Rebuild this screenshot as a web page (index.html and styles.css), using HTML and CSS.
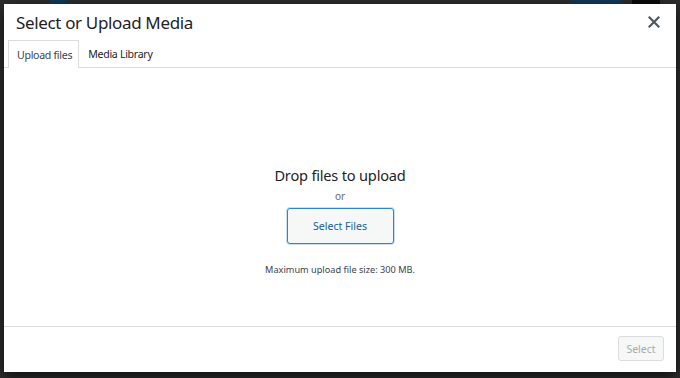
FILE: index.html
```html
<!DOCTYPE html>
<html lang="en">
<head>
  <meta charset="UTF-8" />
  <title>Select or Upload Media</title>
  <link rel="stylesheet" href="styles.css">
</head>
<body>
  <div class="backdrop">
    <span class="bd-blue bd-left"></span>
    <span class="bd-blue bd-publish"></span>
    <span class="bd-black"></span>
  </div>

  <div class="modal">
    <div class="modal-header">
      <h1>Select or Upload Media</h1>
      <button type="button" class="close-btn" aria-label="Close">
        <svg width="12" height="12" viewBox="0 0 12 12">
          <path d="M1.5 1.5 L10.5 10.5 M10.5 1.5 L1.5 10.5" stroke="#50575e" stroke-width="2.2" stroke-linecap="square"/>
        </svg>
      </button>
    </div>

    <div class="tabs">
      <a class="tab active">Upload files</a>
      <a class="tab">Media Library</a>
    </div>

    <div class="uploader">
      <h2>Drop files to upload</h2>
      <p class="or">or</p>
      <button type="button" class="select-files">Select Files</button>
      <p class="max-size">Maximum upload file size: 300 MB.</p>
    </div>

    <div class="modal-footer">
      <button type="button" class="select-btn" disabled>Select</button>
    </div>
  </div>
</body>
</html>
```

FILE: styles.css
```css
:root {
  --text: #1d2327;
  --blue: #2271b1;
  --border: #dcdcde;
  --btn-bg: #f6f7f7;
}

* {
  margin: 0;
  padding: 0;
  box-sizing: border-box;
  font-family: 'Noto Sans', 'Open Sans', sans-serif;
}

body {
  background-color: #2e2e2e;
  padding: 4px;
  height: 378px;
  overflow: hidden;
  position: relative;
}

/* dimmed editor toolbar behind the modal */
.backdrop {
  position: absolute;
  top: 0;
  left: 0;
  right: 0;
  height: 4px;
}

.bd-blue {
  position: absolute;
  top: 0;
  height: 4px;
  background: #123a5a;
}

.bd-left {
  left: 50px;
  width: 17px;
}

.bd-publish {
  left: 571px;
  width: 50px;
}

.bd-black {
  position: absolute;
  left: 632px;
  top: 0;
  width: 28px;
  height: 4px;
  background: #0c0c0c;
}

.modal {
  width: 672px;
  height: 368px;
  background: white;
  display: flex;
  flex-direction: column;
  box-shadow: 0 5px 15px rgba(0, 0, 0, 0.7);
  position: relative;
}

.modal-header {
  display: flex;
  align-items: center;
  justify-content: space-between;
  height: 36px;
  padding: 0 14px 0 12px;
}

h1 {
  font-size: 17px;
  font-weight: 400;
  color: var(--text);
  letter-spacing: -0.35px;
}

.close-btn {
  background: none;
  border: none;
  cursor: pointer;
  width: 16px;
  height: 16px;
  display: flex;
  align-items: center;
  justify-content: center;
}

.tabs {
  display: flex;
  height: 28px;
  padding-left: 4px;
  border-bottom: 1px solid var(--border);
}

.tab {
  display: flex;
  align-items: center;
  padding: 0 6px 0 8px;
  font-size: 10.6px;
  letter-spacing: -0.3px;
  color: var(--text);
  border: 1px solid transparent;
  border-bottom: none;
  cursor: pointer;
}

.tab.active {
  border-color: var(--border);
  background: white;
  margin-bottom: -1px;
  color: #3c434a;
}

.uploader {
  flex: 1;
  display: flex;
  flex-direction: column;
  align-items: center;
  padding-top: 96px;
}

h2 {
  font-size: 14.6px;
  letter-spacing: -0.2px;
  font-weight: 400;
  color: var(--text);
  line-height: 22px;
}

.or {
  font-size: 10px;
  color: #646970;
  margin-top: 3px;
  line-height: 14px;
}

.select-files {
  margin-top: 5px;
  width: 107px;
  height: 36px;
  background: var(--btn-bg);
  border: 1px solid #3582c4;
  border-radius: 3px;
  color: #135e96;
  font-size: 10.6px;
  cursor: pointer;
  box-shadow: 0 0 0 1px rgba(53, 130, 196, 0.25);
}

.max-size {
  margin-top: 19px;
  font-size: 9.2px;
  color: #3c434a;
}

.modal-footer {
  height: 46px;
  border-top: 1px solid var(--border);
  display: flex;
  align-items: center;
  justify-content: flex-end;
  padding: 0 12px 2px 0;
}

.select-btn {
  width: 46px;
  height: 25px;
  background: var(--btn-bg);
  border: 1px solid var(--border);
  border-radius: 3px;
  color: #a7aaad;
  font-size: 10.5px;
}
```
